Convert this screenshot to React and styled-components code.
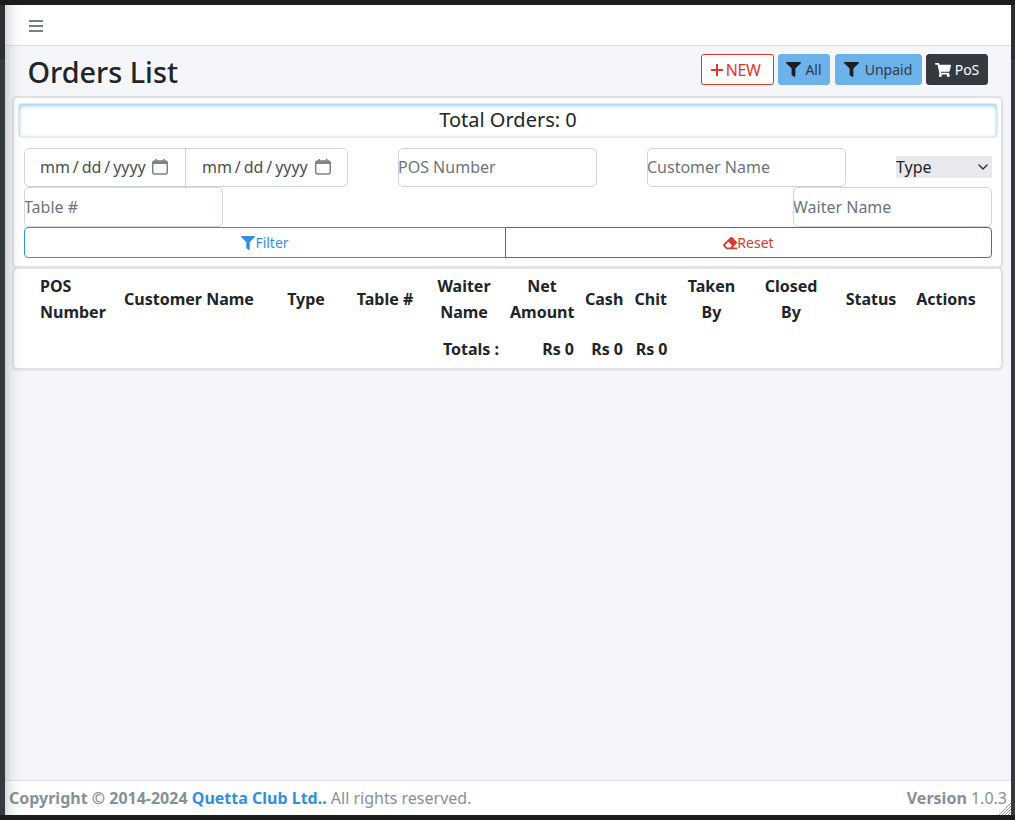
import React from "react";
import styled, { createGlobalStyle } from "styled-components";
import { FaFilter, FaEraser, FaShoppingCart } from "react-icons/fa";
import { ChevronDown } from "lucide-react";

const GlobalStyle = createGlobalStyle`
  html, body {
    margin: 0;
    padding: 0;
    height: 100%;
    background: #1b1c1e;
    font-family: "Noto Sans", sans-serif;
    color: #212529;
  }
  * {
    box-sizing: border-box;
  }
`;

const Frame = styled.div`
  width: 1015px;
  height: 820px;
  padding: 5px 4px 5px 5px;
  overflow: hidden;
  background: linear-gradient(to bottom, #1b1c1e 0, #1b1c1e 5px, #2c3035 5px, #2c3035 60px, #3f444a 60px, #3f444a 61px, #343a40 61px, #343a40 815px, #1b1c1e 815px);
`;

const Wrapper = styled.div`
  position: relative;
  height: 100%;
  display: flex;
  flex-direction: column;
  background: #f4f6f9;
`;

const Shade = styled.div`
  position: absolute;
  inset: 0 auto 0 0;
  width: 18px;
  background: linear-gradient(to right, rgba(0, 0, 0, 0.14), rgba(0, 0, 0, 0.06) 35%, rgba(0, 0, 0, 0.015) 70%, rgba(0, 0, 0, 0));
  pointer-events: none;
`;

const Navbar = styled.div`
  flex: none;
  height: 41px;
  display: flex;
  align-items: center;
  padding: 2px 0 0 24px;
  background: #fff;
  border-bottom: 1px solid #dee2e6;
`;

const Content = styled.div`
  flex: 1;
  padding: 0 9px 0 8px;
`;

const Header = styled.div`
  height: 51px;
  display: flex;
  justify-content: space-between;
  align-items: flex-start;
  padding: 8px 14px 0 15px;
`;

const Title = styled.h1`
  margin: 0 0 0 -0.5px;
  font-size: 28.8px;
  font-weight: 500;
  line-height: 36px;
  color: #212529;
`;

const Actions = styled.div`
  display: flex;
  gap: 4px;
`;

const ActionButton = styled.button`
  height: 31px;
  display: inline-flex;
  align-items: center;
  justify-content: center;
  gap: ${(p) => p.$gap || 4}px;
  width: ${(p) => p.$width}px;
  margin-left: ${(p) => p.$ml || 0}px;
  padding: 0 ${(p) => p.$pr || 0}px 0 0;
  border-radius: 3px;
  border: 1px solid ${(p) => p.$border};
  background: ${(p) => p.$bg};
  color: ${(p) => p.$color};
  font-family: inherit;
  font-size: 14px;
  svg {
    color: ${(p) => p.$icon || "inherit"};
  }
`;

const NewLabel = styled.span`
  font-size: 16px;
  letter-spacing: -0.4px;
`;

const Card = styled.div`
  background: #fff;
  border-radius: 4px;
  box-shadow: 0 0 0 1px #dfe1e5, 0 1px 3px rgba(0, 0, 0, 0.12);
  border: 1px solid #e1e3e6;
`;

const FilterCard = styled(Card)`
  height: 170px;
  padding: 5px 3px 0 4px;
`;

const TotalBar = styled.div`
  height: 35px;
  display: flex;
  align-items: center;
  justify-content: center;
  padding-bottom: 2px;
  font-size: 20px;
  color: #212529;
  border-radius: 4px;
  border: 1px solid #e4e9ee;
  box-shadow: inset 0 2px 4px rgba(108, 178, 240, 0.6), inset 0 0 3px rgba(108, 178, 240, 0.35);
`;

const Filters = styled.div`
  padding: 10px 6px 0 6px;
`;

const TextInput = styled.input`
  width: 199px;
  height: 100%;
  padding: 0;
  text-indent: -1px;
  border: 1px solid #ced4da;
  border-radius: 5px;
  background: #fff;
  font-family: inherit;
  font-size: 16px;
  &::placeholder {
    color: #6c757d;
    opacity: 1;
  }
`;

const TopRow = styled.div`
  display: grid;
  grid-template-columns: 324px 199px 199px 96px;
  justify-content: space-between;
  align-items: center;
  height: 39px;
  ${TextInput} {
    padding-bottom: 1px;
  }
`;

const BottomRow = styled.div`
  display: flex;
  justify-content: space-between;
  height: 40px;
`;

const DateGroup = styled.div`
  display: flex;
  height: 39px;
  border: 1px solid #ced4da;
  border-radius: 5px;
`;

const DateField = styled.div`
  flex: none;
  width: 160px;
  display: flex;
  align-items: center;
  padding: 0 0 1px 15px;
  gap: 6px;
  color: #495057;
  font-size: 16px;
  word-spacing: -1.25px;
  white-space: nowrap;
  & + & {
    flex: 1;
    padding-left: 16px;
    gap: 7px;
    border-left: 1px solid #ced4da;
  }
`;

const SelectWrap = styled.div`
  position: relative;
  height: 22px;
  margin-bottom: 1px;
  background: #e9e9ed;
`;

const TypeSelect = styled.select`
  appearance: none;
  display: block;
  width: 100%;
  height: 100%;
  border: none;
  padding: 0;
  background: transparent;
  color: #212529;
  font-family: inherit;
  font-size: 16px;
`;

const SelectArrow = styled(ChevronDown)`
  position: absolute;
  right: 1px;
  top: 3px;
  color: #2b2a33;
`;

const ButtonRow = styled.div`
  display: grid;
  grid-template-columns: 482px 486px;
  height: 31px;
`;

const OutlineButton = styled.button`
  position: relative;
  display: flex;
  align-items: center;
  justify-content: center;
  padding: 0;
  background: #fff;
  border: 1px solid ${(p) => p.$color};
  border-radius: ${(p) => (p.$side === "left" ? "4px 0 0 4px" : "0 4px 4px 0")};
  margin-left: ${(p) => (p.$side === "left" ? 0 : "-1px")};
  color: ${(p) => p.$color};
  font-family: inherit;
  font-size: 14px;
`;

const TableCard = styled(Card)`
  margin-top: 1px;
  height: 101px;
  padding: 4px 18px 0 20.5px;
`;

const OrdersTable = styled.table`
  width: 947.5px;
  table-layout: fixed;
  border-collapse: collapse;
  font-size: 16px;
  font-weight: 700;
  line-height: 26px;
  color: #212529;
`;

const Th = styled.th`
  padding: 0 5.5px 11px;
  width: ${(p) => p.$w}px;
  text-align: ${(p) => p.$align || "center"};
  font-weight: 700;
`;

const Td = styled.td`
  padding: 0 5.5px;
  text-align: right;
  white-space: nowrap;
`;

const Footer = styled.div`
  position: relative;
  flex: none;
  height: 35px;
  display: flex;
  justify-content: space-between;
  align-items: center;
  padding: 0 4px;
  background: #fff;
  border-top: 1px solid #dee2e6;
  font-size: 16px;
  color: #869099;
`;

const Strong = styled.b`
  font-weight: 700;
`;

const FooterLink = styled.b`
  font-weight: 700;
  color: #3490dc;
`;

const Grip = styled.svg`
  position: absolute;
  right: 0;
  bottom: 0;
`;

const MenuIcon = () => (
  <svg width="14" height="12" viewBox="0 0 14 12">
    <path d="M0 1h14M0 6h14M0 11h14" stroke="#7a8087" strokeWidth="2" />
  </svg>
);

const CalendarIcon = () => (
  <svg width="16" height="16" viewBox="0 0 16 16" fill="none">
    <rect x="0.75" y="2" width="14.5" height="13" rx="2" stroke="#7d8389" strokeWidth="1.5" />
    <rect x="1" y="2" width="14" height="3" fill="#7d8389" />
    <rect x="3.5" y="0" width="1.6" height="3" fill="#7d8389" />
    <rect x="10.9" y="0" width="1.6" height="3" fill="#7d8389" />
  </svg>
);

const DateInput = () => (
  <DateField>
    <span>mm / dd / yyyy</span>
    <CalendarIcon />
  </DateField>
);

export default function App() {
  return (
    <Frame>
      <GlobalStyle />
      <Wrapper>
        <Navbar>
          <MenuIcon />
        </Navbar>
        <Content>
          <Header>
            <Title>Orders List</Title>
            <Actions>
              <ActionButton $width={73} $pr={4} $bg="#fff" $border="#e3342f" $color="#e3342f" $gap={3}>
                <svg width="12" height="12" viewBox="0 0 12 12">
                  <path d="M6 0v12M0 6h12" stroke="#e3342f" strokeWidth="2" />
                </svg>
                <NewLabel>NEW</NewLabel>
              </ActionButton>
              <ActionButton $width={52} $bg="#6cb2eb" $border="#6cb2eb" $color="#343a40" $icon="#1c1f22">
                <FaFilter size={15} />
                All
              </ActionButton>
              <ActionButton $width={87} $ml={1} $pr={1} $bg="#6cb2eb" $border="#6cb2eb" $color="#343a40" $icon="#1c1f22" $gap={6}>
                <FaFilter size={15} />
                Unpaid
              </ActionButton>
              <ActionButton $width={62} $bg="#343a40" $border="#343a40" $color="#fff">
                <FaShoppingCart size={16} />
                PoS
              </ActionButton>
            </Actions>
          </Header>
          <FilterCard>
            <TotalBar>Total Orders: 0</TotalBar>
            <Filters>
              <TopRow>
                <DateGroup>
                  <DateInput />
                  <DateInput />
                </DateGroup>
                <TextInput placeholder="POS Number" />
                <TextInput placeholder="Customer Name" />
                <SelectWrap>
                  <TypeSelect defaultValue="">
                    <option value="">Type</option>
                  </TypeSelect>
                  <SelectArrow size={16} strokeWidth={2} />
                </SelectWrap>
              </TopRow>
              <BottomRow>
                <TextInput placeholder="Table #" />
                <TextInput placeholder="Waiter Name" />
              </BottomRow>
              <ButtonRow>
                <OutlineButton $side="left" $color="#3490dc">
                  <FaFilter size={14} />
                  Filter
                </OutlineButton>
                <OutlineButton $side="right" $color="#e3342f">
                  <FaEraser size={14} />
                  Reset
                </OutlineButton>
              </ButtonRow>
            </Filters>
          </FilterCard>
          <TableCard>
            <OrdersTable>
              <thead>
                <tr>
                  <Th $w={78} $align="left">POS Number</Th>
                  <Th $w={153}>Customer Name</Th>
                  <Th $w={81}>Type</Th>
                  <Th $w={77}>Table #</Th>
                  <Th $w={81}>Waiter Name</Th>
                  <Th $w={75}>Net Amount</Th>
                  <Th $w={49}>Cash</Th>
                  <Th $w={44.5}>Chit</Th>
                  <Th $w={77}>Taken By</Th>
                  <Th $w={82}>Closed By</Th>
                  <Th $w={78}>Status</Th>
                  <Th $w={72}>Actions</Th>
                </tr>
              </thead>
              <tbody>
                <tr>
                  <td colSpan={4} />
                  <Td>Totals :</Td>
                  <Td>Rs 0</Td>
                  <Td>Rs 0</Td>
                  <Td>Rs 0</Td>
                  <td colSpan={4} />
                </tr>
              </tbody>
            </OrdersTable>
          </TableCard>
        </Content>
        <Footer>
          <span>
            <Strong>Copyright © 2014-2024 </Strong>
            <FooterLink>Quetta Club Ltd..</FooterLink> All rights reserved.
          </span>
          <span>
            <Strong>Version</Strong> 1.0.3
          </span>
          <Grip width="13" height="12" viewBox="0 0 13 12">
            <path d="M13 0L1 12M13 3L4 12M13 6L7 12M13 9L10 12" stroke="#9a9a9a" strokeWidth="1" />
          </Grip>
        </Footer>
        <Shade />
      </Wrapper>
    </Frame>
  );
}
